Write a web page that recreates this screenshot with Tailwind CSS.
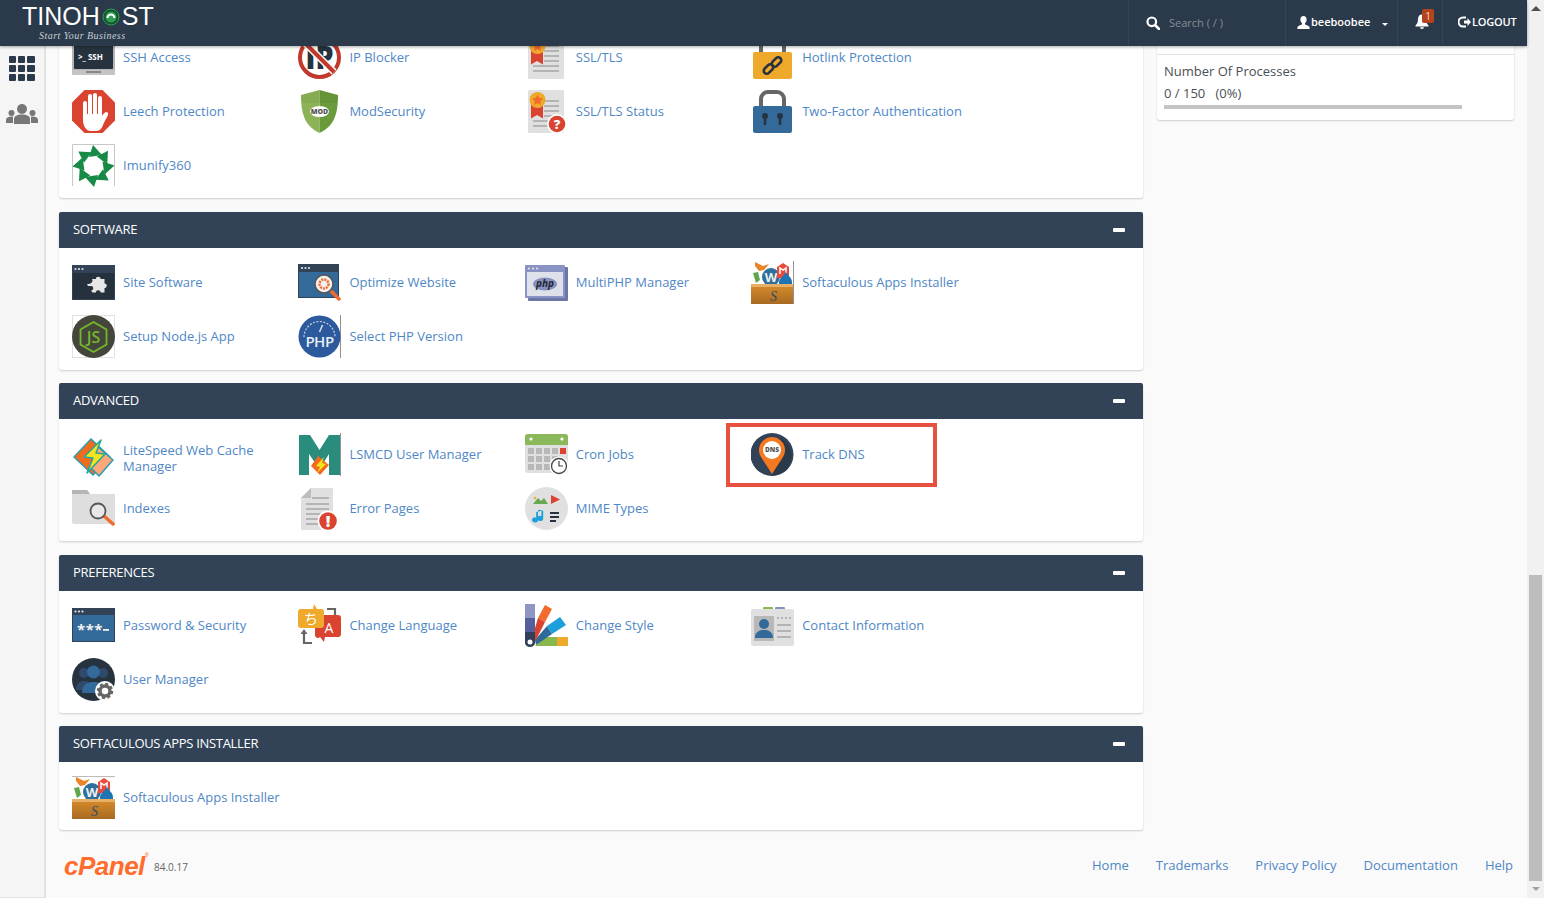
<!DOCTYPE html>
<html lang="en">
<head>
<meta charset="utf-8">
<title>cPanel</title>
<script src="https://cdn.jsdelivr.net/npm/@tailwindcss/browser@4"></script>
</head>
<body class="m-0">
<div class="relative flex w-[1544px] h-[898px] overflow-hidden bg-[#fafafa] font-['Open_Sans',sans-serif] text-[13px] text-[#4a4f55]">

  <!-- page area -->
  <div class="relative flex w-[1527px] h-[898px]">
    <!-- top bar overlay -->
    <header class="absolute top-0 left-0 z-20 flex w-[1527px] h-[46px] items-center bg-[#2a3a4b] text-white shadow-[0_1px_3px_rgba(0,0,0,0.35)]">
      <div class="flex flex-col w-[1128px] h-[46px] pl-[22px]">
        <div class="flex items-center h-[29px] mt-[2px] font-['Liberation_Sans',sans-serif] text-[25px] leading-[29px] tracking-[0px]">
          <span>TINOH</span>
          <svg class="w-[18px] h-[18px] mx-[2px]" viewBox="0 0 18 18"><circle cx="9" cy="9" r="8" fill="#14532d" stroke="#2e9e52" stroke-width="1"/><circle cx="9" cy="9" r="5.5" fill="#2e9e52"/><path d="M4.5 10 A4.5 4.5 0 0 1 13.5 10 L11.5 10 A2.5 2.5 0 0 0 6.5 10 Z" fill="#fff"/></svg>
          <span>ST</span>
        </div>
        <div class="ml-[17px] -mt-[1px] font-['Liberation_Serif',serif] italic text-[10px] leading-[12px] tracking-[0.45px] text-[#c9ced2]">Start Your Business</div>
      </div>
      <div class="flex items-center w-[157px] h-[46px] border-l border-[#344557] pl-[17px]">
        <svg class="w-[14px] h-[14px]" viewBox="0 0 14 14"><circle cx="5.8" cy="5.8" r="4.3" fill="none" stroke="#fff" stroke-width="2.2"/><path d="M9 9l4 4" stroke="#fff" stroke-width="2.6" stroke-linecap="round"/></svg>
        <span class="ml-[9px] text-[11px] text-[#868d95]">Search ( / )</span>
      </div>
      <div class="flex items-center w-[112px] h-[46px] border-l border-[#344557] pl-[11px]">
        <svg class="w-[13px] h-[13px] -mt-[2px]" viewBox="0 0 13 13"><path d="M6.5 0C4.5 0 3.4 1.5 3.4 3.5c0 1.6.7 3 1.6 3.8v1.1C3 9.2.6 10 .4 11.2V13h12.2v-1.8C12.4 10 10 9.2 8 8.4V7.3c.9-.8 1.6-2.2 1.6-3.8C9.600 1.500 8.500 0 6.500 0z" fill="#fff"/></svg>
        <span class="ml-[1px] text-[11px] font-semibold -mt-[1px]">beeboobee</span>
        <span class="ml-[12px] w-0 h-0 mt-[2px] border-x-[3px] border-x-transparent border-t-[3px] border-t-white"></span>
      </div>
      <div class="relative flex items-center w-[45px] h-[46px] border-l border-[#344557] pl-[17px]">
        <svg class="w-[14px] h-[15px] -mt-[3px]" viewBox="0 0 14 15"><path d="M7 0.500C4.500.5 3 2.500 3 5c0 3.500-1 5-2.500 6.500v1h13v-1C12 10 11 8.500 11 5 11 2.500 9.500.5 7 .5zM5 13.300a2 1.700 0 0 0 4 0z" fill="#fff"/></svg>
        <span class="absolute left-[24px] top-[9px] flex items-center justify-center w-[12px] h-[14px] rounded-[2px] bg-[#b5441d] text-[10px] leading-none text-[#f3d9c9]">1</span>
      </div>
      <div class="flex items-center h-[46px] border-l border-[#344557] pl-[15px] -mt-[2px]">
        <svg class="w-[13px] h-[12px]" viewBox="0 0 13 12"><path d="M8 1.500H5a4.500 4.500 0 0 0 0 9h3" fill="none" stroke="#fff" stroke-width="2"/><path d="M6 4.500h3.500V2L13 6l-3.500 4V7.500H6z" fill="#fff"/></svg>
        <span class="ml-[1px] text-[11px] tracking-[-0.2px] font-semibold">LOGOUT</span>
      </div>
    </header>

    <!-- sidebar -->
    <aside class="flex flex-col items-center w-[46px] h-[898px] shrink-0 bg-[#f5f5f5] border-r-2 border-b border-[#e2e2e2] pt-[56px] pr-[1px]">
      <div class="grid grid-cols-3 gap-[2px] w-[26px]">
        <span class="h-[7px] rounded-[1px] bg-[#2b3a4a]"></span><span class="h-[7px] rounded-[1px] bg-[#2b3a4a]"></span><span class="h-[7px] rounded-[1px] bg-[#2b3a4a]"></span>
        <span class="h-[7px] rounded-[1px] bg-[#2b3a4a]"></span><span class="h-[7px] rounded-[1px] bg-[#2b3a4a]"></span><span class="h-[7px] rounded-[1px] bg-[#2b3a4a]"></span>
        <span class="h-[7px] rounded-[1px] bg-[#2b3a4a]"></span><span class="h-[7px] rounded-[1px] bg-[#2b3a4a]"></span><span class="h-[7px] rounded-[1px] bg-[#2b3a4a]"></span>
      </div>
      <svg class="w-[32px] h-[20px] mt-[23px]" viewBox="0 0 32 20" fill="#777"><circle cx="16" cy="5" r="5"/><path d="M8 20v-5c0-3 3-4.500 8-4.500s8 1.500 8 4.500v5z"/><circle cx="5.500" cy="9" r="3"/><path d="M0 19v-3c0-2 2-3.500 5.500-3.500 1 0 1.500.1 1.500.1V19z"/><circle cx="26.500" cy="9" r="3"/><path d="M32 19v-3c0-2-2-3.500-5.500-3.500-1 0-1.500.1-1.500.1V19z"/></svg>
    </aside>

    <!-- content -->
    <main class="flex flex-col w-[1481px] h-[898px]">
      <div class="flex gap-[14px] pl-[13px] pr-[13px] h-[830px]">
        <!-- left column -->
        <div class="flex flex-col w-[1084px] shrink-0">

          <section class="h-[198px] bg-white rounded-b-[3px] shadow-[0_1px_2px_rgba(0,0,0,0.18)] pl-[13px] pt-[36px]">
            <div class="grid grid-cols-[226.4px_226.4px_226.4px_226.4px] gap-y-[11px] text-[#4f87c6]">
              <a class="flex items-center gap-[8px] h-[43px]">
                <svg class="w-[43px] h-[43px] shrink-0" viewBox="0 0 43 43"><rect width="43" height="36" rx="1" fill="#b5b5b5"/><rect y="34" width="43" height="5" rx="1" fill="#c4c4c4"/><rect x="2" y="1" width="39" height="32" rx="1" fill="#26333f"/><rect x="14" y="35" width="15" height="2" fill="#888"/><text x="6" y="24" font-size="8" font-weight="700" fill="#fff">&gt;_ SSH</text></svg>
                <span>SSH Access</span>
              </a>
              <a class="flex items-center gap-[8px] h-[43px]">
                <svg class="w-[43px] h-[43px] shrink-0" viewBox="0 0 43 43"><circle cx="21.500" cy="21.500" r="19.500" fill="#fff" stroke="#c0392b" stroke-width="4"/><text x="21.500" y="33" font-size="31" font-weight="800" text-anchor="middle" fill="#26333f" textLength="28" lengthAdjust="spacingAndGlyphs">IP</text><path d="M7 7L36 36" stroke="#fff" stroke-width="7"/><path d="M7 7L36 36" stroke="#c0392b" stroke-width="4"/></svg>
                <span>IP Blocker</span>
              </a>
              <a class="flex items-center gap-[8px] h-[43px]">
                <svg class="w-[43px] h-[43px] shrink-0" viewBox="0 0 43 43"><rect x="3" width="36" height="43" rx="1.500" fill="#e0e0e0"/><g fill="#b4b4b4"><rect x="19" y="9" width="15" height="2"/><rect x="19" y="14" width="15" height="2"/><rect x="19" y="19" width="15" height="2"/><rect x="19" y="24" width="15" height="2"/><rect x="8" y="29" width="26" height="2"/><rect x="8" y="34" width="26" height="2"/></g><path d="M6 12h12v16.500l-6-3.500-6 3.500z" fill="#d9432f"/><circle cx="12.500" cy="10" r="8" fill="#efa92b"/><path d="M12.500 4.500l1.700 3.500 3.800.5-2.800 2.600.7 3.800-3.400-1.800-3.400 1.800.7-3.800L7 8.500l3.800-.5z" fill="#f26b2c"/></svg>
                <span>SSL/TLS</span>
              </a>
              <a class="flex items-center gap-[8px] h-[43px]">
                <svg class="w-[43px] h-[43px] shrink-0" viewBox="0 0 43 43"><path d="M10 18V9a5 5 0 0 1 5-5h13a5 5 0 0 1 5 5v9" fill="none" stroke="#666" stroke-width="4"/><rect x="2" y="16" width="39" height="27" rx="2" fill="#eea82a"/><g fill="none" stroke="#26333f" stroke-width="2.600"><rect x="12" y="30" width="11" height="6" rx="3" transform="rotate(-45 17.500 33)"/><rect x="20" y="23" width="11" height="6" rx="3" transform="rotate(-45 25.500 26)"/></g></svg>
                <span>Hotlink Protection</span>
              </a>

              <a class="flex items-center gap-[8px] h-[43px]">
                <svg class="w-[43px] h-[43px] shrink-0" viewBox="0 0 43 43"><polygon points="12.500,0 30.500,0 43,12.500 43,30.500 30.500,43 12.500,43 0,30.500 0,12.500" fill="#d9432f"/><g fill="#fff"><rect x="11" y="11" width="4" height="18" rx="2"/><rect x="16" y="4" width="4" height="24" rx="2"/><rect x="21" y="3" width="4" height="24" rx="2"/><rect x="26" y="6" width="4" height="22" rx="2"/><path d="M11 24H30V26C31 24 34 20 36 23C37 25 33 30 31 35C30 38 28 41 24 41H19C14 41 11 36 11 30Z"/></g></svg>
                <span>Leech Protection</span>
              </a>
              <a class="flex items-center gap-[8px] h-[43px]">
                <svg class="w-[43px] h-[43px] shrink-0" viewBox="0 0 43 43"><path d="M21.500 0L3 5C3 22 6 36 21.500 43Z" fill="#8cb356"/><path d="M21.500 0L40 5C40 22 37 36 21.500 43Z" fill="#6a9a3a"/><path d="M21.500 0L3 5l1 8h35l1-8z" fill="#000" opacity="0.04"/><ellipse cx="21.500" cy="21.500" rx="9.500" ry="5.500" fill="#fff"/><text x="21.500" y="24" font-size="7" font-weight="800" text-anchor="middle" fill="#555">MOD</text></svg>
                <span>ModSecurity</span>
              </a>
              <a class="flex items-center gap-[8px] h-[43px]">
                <svg class="w-[43px] h-[43px] shrink-0" viewBox="0 0 43 43"><rect x="3" width="36" height="43" rx="1.500" fill="#e0e0e0"/><g fill="#b4b4b4"><rect x="19" y="10" width="15" height="2"/><rect x="19" y="15" width="15" height="2"/><rect x="19" y="20" width="15" height="2"/><rect x="19" y="25" width="10" height="2"/><rect x="8" y="30" width="16" height="2"/><rect x="8" y="35" width="16" height="2"/></g><path d="M6 12h12v16.500l-6-3.500-6 3.500z" fill="#d9432f"/><circle cx="12.500" cy="10" r="8" fill="#efa92b"/><path d="M12.500 4.500l1.700 3.500 3.800.5-2.800 2.600.7 3.800-3.400-1.800-3.400 1.800.7-3.800L7 8.500l3.800-.5z" fill="#f26b2c"/><circle cx="32" cy="34" r="10" fill="#fff"/><circle cx="32" cy="34" r="8.300" fill="#d9432f"/><text x="32" y="39" font-size="13" font-weight="800" text-anchor="middle" fill="#fff">?</text></svg>
                <span>SSL/TLS Status</span>
              </a>
              <a class="flex items-center gap-[8px] h-[43px]">
                <svg class="w-[43px] h-[43px] shrink-0" viewBox="0 0 43 43"><path d="M10 18V9a7 7 0 0 1 7-7h9a7 7 0 0 1 7 7v9" fill="none" stroke="#666" stroke-width="4"/><rect x="2" y="16" width="39" height="27" rx="2" fill="#346a9a"/><g fill="#26333f"><circle cx="14" cy="26" r="3"/><rect x="12.800" y="26" width="2.400" height="9"/><circle cx="29" cy="26" r="3"/><rect x="27.800" y="26" width="2.400" height="9"/></g></svg>
                <span>Two-Factor Authentication</span>
              </a>

              <a class="flex items-center gap-[8px] h-[43px]">
                <svg class="w-[43px] h-[43px] shrink-0" viewBox="0 0 43 43"><path d="M0.500 42V.5H42.500V42" fill="none" stroke="#c8c8c8"/><g fill="#178a45"><polygon points="21,1 30,11 17,13"/><polygon points="21,1 30,11 17,13" transform="rotate(45 21.500 22)"/><polygon points="21,1 30,11 17,13" transform="rotate(90 21.500 22)"/><polygon points="21,1 30,11 17,13" transform="rotate(135 21.500 22)"/><polygon points="21,1 30,11 17,13" transform="rotate(180 21.500 22)"/><polygon points="21,1 30,11 17,13" transform="rotate(225 21.500 22)"/><polygon points="21,1 30,11 17,13" transform="rotate(270 21.500 22)"/><polygon points="21,1 30,11 17,13" transform="rotate(315 21.500 22)"/></g><circle cx="21.500" cy="22" r="6.500" fill="#fff"/></svg>
                <span>Imunify360</span>
              </a>
            </div>
          </section>

          <section class="mt-[14px] bg-white rounded-[3px] shadow-[0_1px_2px_rgba(0,0,0,0.18)]">
            <div class="flex items-center justify-between h-[36px] bg-[#324358] rounded-t-[2px] pl-[14px] pr-[18px] text-white tracking-[-0.3px]">
              <span>SOFTWARE</span><span class="w-[12px] h-[4px] bg-white rounded-[1px]"></span>
            </div>
            <div class="grid grid-cols-[226.4px_226.4px_226.4px_226.4px] gap-y-[11px] pl-[13px] pt-[13px] pb-[12px] text-[#4f87c6]">
              <a class="flex items-center gap-[8px] h-[43px]">
                <svg class="w-[43px] h-[43px] shrink-0" viewBox="0 0 43 43"><rect y="4" width="43" height="35" fill="#324358"/><rect x="1" y="12" width="41" height="26" fill="#25323e"/><g fill="#e6e6e6"><circle cx="3.500" cy="8" r="1.100"/><circle cx="7" cy="8" r="1.100"/><circle cx="10.500" cy="8" r="1.100"/><path d="M20 18h4c-.5-3 5-3 4.500 0h4v4.500c3-.5 3 5 0 4.500v4.500h-4c.5-3-5-3-4.500 0h-3.500l-1.500-2c3 .5 3-5 0-4.500h-3l-1-2c3 .5 7-2 5-5z"/></g></svg>
                <span>Site Software</span>
              </a>
              <a class="flex items-center gap-[8px] h-[43px]">
                <svg class="w-[43px] h-[43px] shrink-0" viewBox="0 0 43 43"><rect y="3" width="41" height="34" fill="#324358"/><rect x="1" y="11" width="39" height="25" fill="#346a9a"/><g fill="#e6e6e6"><circle cx="4" cy="7" r="1.100"/><circle cx="7.500" cy="7" r="1.100"/><circle cx="11" cy="7" r="1.100"/></g><path d="M32 29l9 9" stroke="#f26b2c" stroke-width="3.500" stroke-linecap="round"/><circle cx="26" cy="23" r="9" fill="#f2f2f2" stroke="#555" stroke-width="1.500"/><circle cx="26" cy="23" r="4.500" fill="none" stroke="#f26b2c" stroke-width="2.500" stroke-dasharray="2 1"/></svg>
                <span>Optimize Website</span>
              </a>
              <a class="flex items-center gap-[8px] h-[43px]">
                <svg class="w-[43px] h-[43px] shrink-0" viewBox="0 0 43 43"><rect x="3" y="6" width="40" height="34" rx="1" fill="#6c76a8"/><rect y="4" width="40" height="33" rx="1" fill="#8a94c4"/><rect x="2" y="11" width="36" height="24" fill="#dfe1ea"/><g fill="#dfe1ea"><circle cx="4" cy="7.500" r="1.100"/><circle cx="8" cy="7.500" r="1.100"/><circle cx="12" cy="7.500" r="1.100"/></g><ellipse cx="20" cy="23" rx="12" ry="6.500" fill="#8892bf"/><text x="20" y="26" font-size="10" font-weight="700" font-style="italic" text-anchor="middle" fill="#232531">php</text></svg>
                <span>MultiPHP Manager</span>
              </a>
              <a class="flex items-center gap-[8px] h-[43px]">
                <svg class="w-[43px] h-[43px] shrink-0" viewBox="0 0 43 43"><defs><linearGradient id="box1" x1="0" y1="0" x2="0" y2="1"><stop offset="0" stop-color="#d98d2b"/><stop offset="1" stop-color="#a86a22"/></linearGradient></defs><rect x="42.500" width="1" height="43" fill="#222"/><circle cx="20" cy="16" r="9" fill="#2e6f9b"/><text x="20" y="21" font-size="13" font-weight="700" text-anchor="middle" fill="#eee">W</text><path d="M26 6l6-4 6 4v11h-12z" fill="#e84a3c"/><path d="M29 13V7l3 2 3-2v6" fill="none" stroke="#fff" stroke-width="1.500"/><path d="M35 10c0 4 7 6 6 13H28c-1-6 6-8 7-13z" fill="#1f75b3"/><path d="M4 1l8 4 6-2-5 6-5 1-4-5z" fill="#e98527"/><path d="M2 12l5-1 2 8-4 3z" fill="#5fa54a"/><rect y="23" width="42" height="20" fill="url(#box1)"/><rect y="23" width="42" height="3" fill="#e6b066"/><text x="19" y="40" font-size="14" font-style="italic" font-family="Liberation Serif" fill="#334a63">S</text></svg>
                <span>Softaculous Apps Installer</span>
              </a>
              <a class="flex items-center gap-[8px] h-[43px]">
                <svg class="w-[43px] h-[43px] shrink-0" viewBox="0 0 43 43"><rect x=".5" y=".5" width="42" height="42" fill="none" stroke="#e2e2e2"/><circle cx="21.500" cy="21.500" r="21.500" fill="#44463c"/><path d="M21.500 7l13 7.500v15l-13 7.500-13-7.500v-15z" fill="none" stroke="#76b82a" stroke-width="1.800"/><text x="21.500" y="28" font-size="16" font-weight="600" text-anchor="middle" fill="#76b82a">JS</text></svg>
                <span>Setup Node.js App</span>
              </a>
              <a class="flex items-center gap-[8px] h-[43px]">
                <svg class="w-[43px] h-[43px] shrink-0" viewBox="0 0 43 43"><rect x="42.500" width="1" height="43" fill="#222"/><circle cx="21.500" cy="21.500" r="21" fill="#2c5a9c"/><path d="M6 22A15.500 15.500 0 0 1 37 22" fill="none" stroke="#c4d4e8" stroke-width="1.200" stroke-dasharray="2 1.500"/><path d="M21.500 17l3-7" stroke="#d8e2ee" stroke-width="1.500"/><text x="21.500" y="32" font-size="15" font-weight="600" text-anchor="middle" fill="#e8eef5" letter-spacing="-0.500">PHP</text></svg>
                <span>Select PHP Version</span>
              </a>
            </div>
          </section>

          <section class="mt-[13px] bg-white rounded-[3px] shadow-[0_1px_2px_rgba(0,0,0,0.18)]">
            <div class="flex items-center justify-between h-[36px] bg-[#324358] rounded-t-[2px] pl-[14px] pr-[18px] text-white tracking-[-0.3px]">
              <span>ADVANCED</span><span class="w-[12px] h-[4px] bg-white rounded-[1px]"></span>
            </div>
            <div class="relative grid grid-cols-[226.4px_226.4px_226.4px_226.4px] gap-y-[11px] pl-[13px] pt-[14px] pb-[11px] text-[#4f87c6]">
              <a class="flex items-center gap-[8px] h-[43px] translate-y-[3px]">
                <svg class="w-[43px] h-[43px] shrink-0" viewBox="0 0 43 43"><path d="M19 3L38 21 21 39 2 21z" fill="#f26b1d" stroke="#2b9cb0" stroke-width="1.500" stroke-linejoin="round"/><path d="M24 9l17 15-14 16-8-8z" fill="#fba77a" stroke="#2b9cb0" stroke-width="1.500" stroke-linejoin="round"/><path d="M29 4L12 21l9 1-6 15 18-19-9-1z" fill="#f1e51d" stroke="#23a5a0" stroke-width="1.500" stroke-linejoin="round"/></svg>
                <span class="w-[165px] leading-[16px]">LiteSpeed Web Cache Manager</span>
              </a>
              <a class="flex items-center gap-[8px] h-[43px]">
                <svg class="w-[43px] h-[43px] shrink-0" viewBox="0 0 43 43"><rect x="42.500" width="1" height="43" fill="#222"/><path d="M1 42V2h11l9.500 15L31 2h11v40H31V21l-9.500 15L11 21v21z" fill="#2a8c7c"/><path d="M20 23l11 9-9 10-9-9z" fill="#f26b1d"/><path d="M26 24l-8 9 4 1-3 6 9-9-4-1z" fill="#f1e51d"/></svg>
                <span>LSMCD User Manager</span>
              </a>
              <a class="flex items-center gap-[8px] h-[43px]">
                <svg class="w-[43px] h-[43px] shrink-0" viewBox="0 0 43 43"><rect y="1" width="43" height="39" rx="3" fill="#e0e0e0"/><path d="M0 12V4a3 3 0 0 1 3-3h37a3 3 0 0 1 3 3v8z" fill="#8cb85c"/><circle cx="6" cy="6" r="1.600" fill="#fff"/><circle cx="37" cy="6" r="1.600" fill="#fff"/><g fill="#b8b8b8"><rect x="3" y="15" width="6" height="6"/><rect x="11" y="15" width="6" height="6"/><rect x="19" y="15" width="6" height="6"/><rect x="27" y="15" width="6" height="6"/><rect x="3" y="23" width="6" height="6"/><rect x="11" y="23" width="6" height="6"/><rect x="19" y="23" width="6" height="6"/><rect x="27" y="23" width="6" height="6"/><rect x="3" y="31" width="6" height="6"/><rect x="11" y="31" width="6" height="6"/><rect x="19" y="31" width="6" height="6"/></g><rect x="35" y="15" width="6" height="6" fill="#d9432f"/><circle cx="34" cy="33" r="9.500" fill="#fff"/><circle cx="34" cy="33" r="7.500" fill="#fff" stroke="#444" stroke-width="1.300"/><path d="M34 28v5h4" fill="none" stroke="#444" stroke-width="1.200"/></svg>
                <span>Cron Jobs</span>
              </a>
              <a class="flex items-center gap-[8px] h-[43px]">
                <svg class="w-[43px] h-[43px] shrink-0" viewBox="0 0 43 43"><circle cx="21" cy="21.500" r="21.500" fill="#324358"/><path d="M30 5A21 21 0 0 1 36 36C32 40 27 42 21 43z" fill="#2a3a4b"/><path d="M21 41L10 24a13 13 0 1 1 22 0z" fill="#f47920"/><circle cx="21" cy="17" r="9" fill="#fff"/><text x="21" y="19" font-size="6.500" font-weight="800" text-anchor="middle" fill="#555">DNS</text></svg>
                <span>Track DNS</span>
              </a>
              <a class="flex items-center gap-[8px] h-[43px]">
                <svg class="w-[43px] h-[43px] shrink-0" viewBox="0 0 43 43"><path d="M0 5a2 2 0 0 1 2-2h13l3 4h25v30H2a2 2 0 0 1-2-2z" fill="#dedede"/><path d="M0 3h15l3 4H0z" fill="#b5b5b5"/><path d="M32 29l9 8" stroke="#f26b2c" stroke-width="3.500" stroke-linecap="round"/><circle cx="26" cy="24" r="7.500" fill="#e8e8e8" stroke="#555" stroke-width="1.800"/></svg>
                <span>Indexes</span>
              </a>
              <a class="flex items-center gap-[8px] h-[43px]">
                <svg class="w-[43px] h-[43px] shrink-0" viewBox="0 0 43 43"><path d="M3 11L13 1h22v42H3z" fill="#e0e0e0"/><path d="M3 11h10V1z" fill="#bdbdbd"/><g fill="#b4b4b4"><rect x="14" y="10" width="17" height="2"/><rect x="8" y="16" width="23" height="2"/><rect x="8" y="21" width="23" height="2"/><rect x="8" y="26" width="23" height="2"/><rect x="8" y="31" width="14" height="2"/><rect x="8" y="36" width="14" height="2"/></g><circle cx="30" cy="34" r="10.500" fill="#fff"/><circle cx="30" cy="34" r="8.800" fill="#d9432f"/><text x="30" y="40" font-size="16" font-weight="800" text-anchor="middle" fill="#fff">!</text></svg>
                <span>Error Pages</span>
              </a>
              <a class="flex items-center gap-[8px] h-[43px]">
                <svg class="w-[43px] h-[43px] shrink-0" viewBox="0 0 43 43"><circle cx="21.500" cy="21.500" r="21.500" fill="#e0e0e0"/><path d="M8 17l5-6 3 3 3-3 4 6z" fill="#6aa84f"/><circle cx="10" cy="11" r="1.200" fill="#efa92b"/><path d="M26 8l9 4.500-9 4.500z" fill="#d9432f"/><path d="M13 23v10a3 2.500 0 1 1-1.800-2.300V25l7-1.500v8a3 2.500 0 1 1-1.800-2.300V23z" fill="#1ba0dc"/><g fill="#26333f"><rect x="25" y="25" width="9" height="2"/><rect x="25" y="29" width="9" height="2"/><rect x="25" y="33" width="6" height="2"/></g></svg>
                <span>MIME Types</span>
              </a>
              <!-- highlight annotation -->
              <div class="absolute left-[667px] top-[4px] w-[211px] h-[64px] border-[4px] border-[#e8503f]"></div>
            </div>
          </section>

          <section class="mt-[14px] bg-white rounded-[3px] shadow-[0_1px_2px_rgba(0,0,0,0.18)]">
            <div class="flex items-center justify-between h-[36px] bg-[#324358] rounded-t-[2px] pl-[14px] pr-[18px] text-white tracking-[-0.3px]">
              <span>PREFERENCES</span><span class="w-[12px] h-[4px] bg-white rounded-[1px]"></span>
            </div>
            <div class="grid grid-cols-[226.4px_226.4px_226.4px_226.4px] gap-y-[11px] pl-[13px] pt-[13px] pb-[12px] text-[#4f87c6]">
              <a class="flex items-center gap-[8px] h-[43px]">
                <svg class="w-[43px] h-[43px] shrink-0" viewBox="0 0 43 43"><rect y="4" width="43" height="34" fill="#324358"/><rect x="1" y="11" width="41" height="26" fill="#346a9a"/><g fill="#e6e6e6"><circle cx="3.500" cy="7.500" r="1.100"/><circle cx="7" cy="7.500" r="1.100"/><circle cx="10.500" cy="7.500" r="1.100"/></g><text x="5" y="31" font-size="15" font-weight="700" fill="#f2f2f2" letter-spacing="0.500">***</text><rect x="31" y="25" width="6" height="1.800" fill="#f2f2f2"/></svg>
                <span>Password &amp; Security</span>
              </a>
              <a class="flex items-center gap-[8px] h-[43px]">
                <svg class="w-[43px] h-[43px] shrink-0" viewBox="0 0 43 43"><path d="M29 5h8v10" fill="none" stroke="#666" stroke-width="2.200"/><path d="M33.500 14h7L37 19z" fill="#666"/><path d="M14 39H6V29" fill="none" stroke="#666" stroke-width="2.200"/><path d="M2.500 30h7L6 25z" fill="#666"/><path d="M17 11h23a3 3 0 0 1 3 3v16a3 3 0 0 1-3 3h-13l-1 5-4-5a3 3 0 0 1-5-3z" fill="#d9432f"/><path d="M3 5h12l1-5 3 5h4a3 3 0 0 1 3 3v13a3 3 0 0 1-3 3H3a3 3 0 0 1-3-3V8a3 3 0 0 1 3-3z" fill="#efa92b"/><text x="13" y="20" font-size="14" font-family="Noto Sans CJK JP" text-anchor="middle" fill="#fff">ち</text><text x="31" y="29" font-size="14" text-anchor="middle" fill="#fff">A</text></svg>
                <span>Change Language</span>
              </a>
              <a class="flex items-center gap-[8px] h-[43px]">
                <svg class="w-[43px] h-[43px] shrink-0" viewBox="0 0 43 43"><polygon points="20,33 32,33 32,42 10,42" fill="#8ab84f"/><rect x="32" y="33" width="11" height="9" fill="#efa92b"/><polygon points="35,13 41,21 27,30 22,22" fill="#1ba0dc"/><polygon points="22,22 27,30 11,41 10,36" fill="#2f6a9a"/><polygon points="20,1 27,5 20,18 13,14" fill="#f26b2c"/><polygon points="13,14 20,18 10,38 10,24" fill="#d9432f"/><rect width="10" height="14" fill="#8e97c3"/><rect y="14" width="10" height="14" fill="#565f9e"/><path d="M0 28h10v11a5 4 0 0 1-10 0z" fill="#2f4058"/><circle cx="5" cy="38" r="2.500" fill="#fff"/></svg>
                <span>Change Style</span>
              </a>
              <a class="flex items-center gap-[8px] h-[43px]">
                <svg class="w-[43px] h-[43px] shrink-0" viewBox="0 0 43 43"><rect x="12" y="3" width="10" height="6" rx="1" fill="#8ab84f"/><rect x="24" y="3" width="10" height="6" rx="1" fill="#8892bf"/><rect y="5" width="43" height="37" rx="2" fill="#e0e0e0"/><rect x="9" y="3" width="25" height="3" fill="#fff" opacity="0"/><rect x="3" y="12" width="20" height="25" fill="#b8b8b8"/><circle cx="13" cy="20" r="5" fill="#346a9a"/><path d="M4 34c0-6 4-7 6-8h6c2 1 6 2 6 8z" fill="#346a9a"/><g fill="#b4b4b4"><rect x="26" y="13" width="2" height="2"/><rect x="30" y="13" width="2" height="2"/><rect x="34" y="13" width="2" height="2"/><rect x="38" y="13" width="2" height="2"/><rect x="26" y="20" width="14" height="2"/><rect x="26" y="26" width="14" height="2"/><rect x="26" y="32" width="14" height="2"/></g></svg>
                <span>Contact Information</span>
              </a>
              <a class="flex items-center gap-[8px] h-[43px]">
                <svg class="w-[43px] h-[43px] shrink-0" viewBox="0 0 43 43"><circle cx="21.500" cy="21.500" r="21.500" fill="#26333f"/><g fill="#2f4a6a"><circle cx="12" cy="15" r="5"/><circle cx="31" cy="15" r="5"/><path d="M4 32c0-7 4-9 8-9s8 2 8 9z"/><path d="M23 32c0-7 4-9 8-9s8 2 8 9z"/></g><circle cx="21.500" cy="14" r="6.500" fill="#346a9a"/><path d="M10 35c0-9 6-11 11.500-11S33 26 33 35z" fill="#346a9a"/><circle cx="33" cy="33" r="10" fill="#fff"/><circle cx="33" cy="33" r="5" fill="none" stroke="#666" stroke-width="3.500"/><circle cx="33" cy="33" r="7" fill="none" stroke="#666" stroke-width="2.500" stroke-dasharray="3 2.500"/></svg>
                <span>User Manager</span>
              </a>
            </div>
          </section>

          <section class="mt-[13px] bg-white rounded-[3px] shadow-[0_1px_2px_rgba(0,0,0,0.18)]">
            <div class="flex items-center justify-between h-[36px] bg-[#324358] rounded-t-[2px] pl-[14px] pr-[18px] text-white tracking-[-0.3px]">
              <span>SOFTACULOUS APPS INSTALLER</span><span class="w-[12px] h-[4px] bg-white rounded-[1px]"></span>
            </div>
            <div class="pl-[13px] pt-[14px] pb-[11px] text-[#4f87c6]">
              <a class="flex items-center gap-[8px] h-[43px]">
                <svg class="w-[43px] h-[43px] shrink-0" viewBox="0 0 43 43"><defs><linearGradient id="box2" x1="0" y1="0" x2="0" y2="1"><stop offset="0" stop-color="#d98d2b"/><stop offset="1" stop-color="#a86a22"/></linearGradient></defs><rect width="43" height="1" fill="#bbb"/><circle cx="20" cy="16" r="9" fill="#2e6f9b"/><text x="20" y="21" font-size="13" font-weight="700" text-anchor="middle" fill="#eee">W</text><path d="M26 6l6-4 6 4v11h-12z" fill="#e84a3c"/><path d="M29 13V7l3 2 3-2v6" fill="none" stroke="#fff" stroke-width="1.500"/><path d="M35 10c0 4 7 6 6 13H28c-1-6 6-8 7-13z" fill="#1f75b3"/><path d="M4 1l8 4 6-2-5 6-5 1-4-5z" fill="#e98527"/><path d="M2 12l5-1 2 8-4 3z" fill="#5fa54a"/><rect y="23" width="43" height="20" fill="url(#box2)"/><rect y="23" width="43" height="3" fill="#e6b066"/><text x="19" y="40" font-size="14" font-style="italic" font-family="Liberation Serif" fill="#334a63">S</text></svg>
                <span>Softaculous Apps Installer</span>
              </a>
            </div>
          </section>
        </div>

        <!-- right column -->
        <div class="w-[357px] shrink-0">
          <div class="h-[120px] bg-white rounded-b-[3px] shadow-[0_1px_2px_rgba(0,0,0,0.18)] pt-[54px]">
            <div class="border-t border-[#e2e2e2] px-[7px] pt-[7px]">
              <div class="leading-[18px]">Number Of Processes</div>
              <div class="mt-[4px] leading-[18px]">0 / 150 &nbsp; (0%)</div>
              <div class="w-[298px] h-[4px] mt-[3px] bg-[#c4c4c4]"></div>
            </div>
          </div>
        </div>
      </div>

      <!-- footer -->
      <footer class="flex items-center justify-between h-[68px] pl-[18px] pr-[14px] pt-[4px] text-[#4f87c6]">
        <div class="flex items-center">
          <span class="font-['Liberation_Sans',sans-serif] font-bold italic text-[26px] leading-none tracking-[-0.5px] text-[#ff6c2c]">cPanel</span>
          <span class="self-start text-[5px] leading-none text-[#ff6c2c]">®</span>
          <span class="ml-[5px] mt-[2px] text-[10px] text-[#666]">84.0.17</span>
        </div>
        <nav class="flex gap-[27px]">
          <a>Home</a><a>Trademarks</a><a>Privacy Policy</a><a>Documentation</a><a>Help</a>
        </nav>
      </footer>
    </main>
  </div>

  <!-- scrollbar -->
  <div class="flex flex-col items-center w-[17px] h-[898px] bg-[#f1f1f1]">
    <span class="mt-[6px] w-0 h-0 border-x-[5px] border-x-transparent border-b-[5px] border-b-[#505050]"></span>
    <span class="mt-[564px] w-[13px] h-[306px] bg-[#bdbdbd]"></span>
    <span class="mt-[6px] w-0 h-0 border-x-[4px] border-x-transparent border-t-[4px] border-t-[#a3a3a3]"></span>
  </div>
</div>
</body>
</html>
